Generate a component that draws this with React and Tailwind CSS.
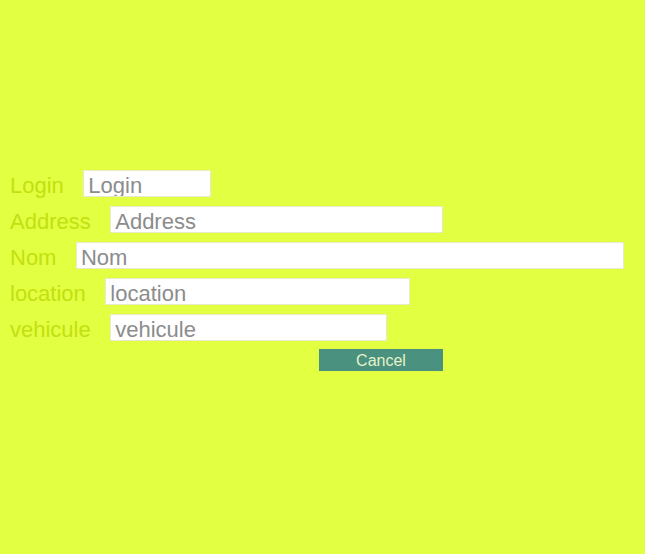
export default function App() {
  const fields = [
    { label: 'Login', width: 'w-[128px]' },
    { label: 'Address', width: 'w-[333px]' },
    { label: 'Nom', width: 'w-[548px]' },
    { label: 'location', width: 'w-[305px]' },
    { label: 'vehicule', width: 'w-[277px]' },
  ]

  return (
    <div className="min-h-[554px] w-full bg-[#e3ff42] pt-[170px] pl-[10px] font-['Liberation_Sans',Arial,sans-serif]">
      <form className="flex flex-col gap-[9px]">
        {fields.map((f) => (
          <div key={f.label} className="flex items-start gap-[19.5px]">
            <label className="pt-[4px] text-[22px] leading-[23px] text-[#c2e010]">{f.label}</label>
            <input
              type="text"
              placeholder={f.label}
              className={`${f.width} h-[27px] border border-[#eaeac8] bg-white px-[4px] pt-[4px] text-[22px] leading-[21px] text-[#555] outline-none placeholder:text-[#8c8c8c]`}
            />
          </div>
        ))}
      </form>
      {/* Cancel button */}
      <div className="mt-[8px] pl-[309px]">
        <button
          type="button"
          className="h-[22px] w-[124px] bg-[#4a9180] pt-[1px] text-[16px] leading-[21px] text-[#e6f3c8]"
        >
          Cancel
        </button>
      </div>
    </div>
  )
}
